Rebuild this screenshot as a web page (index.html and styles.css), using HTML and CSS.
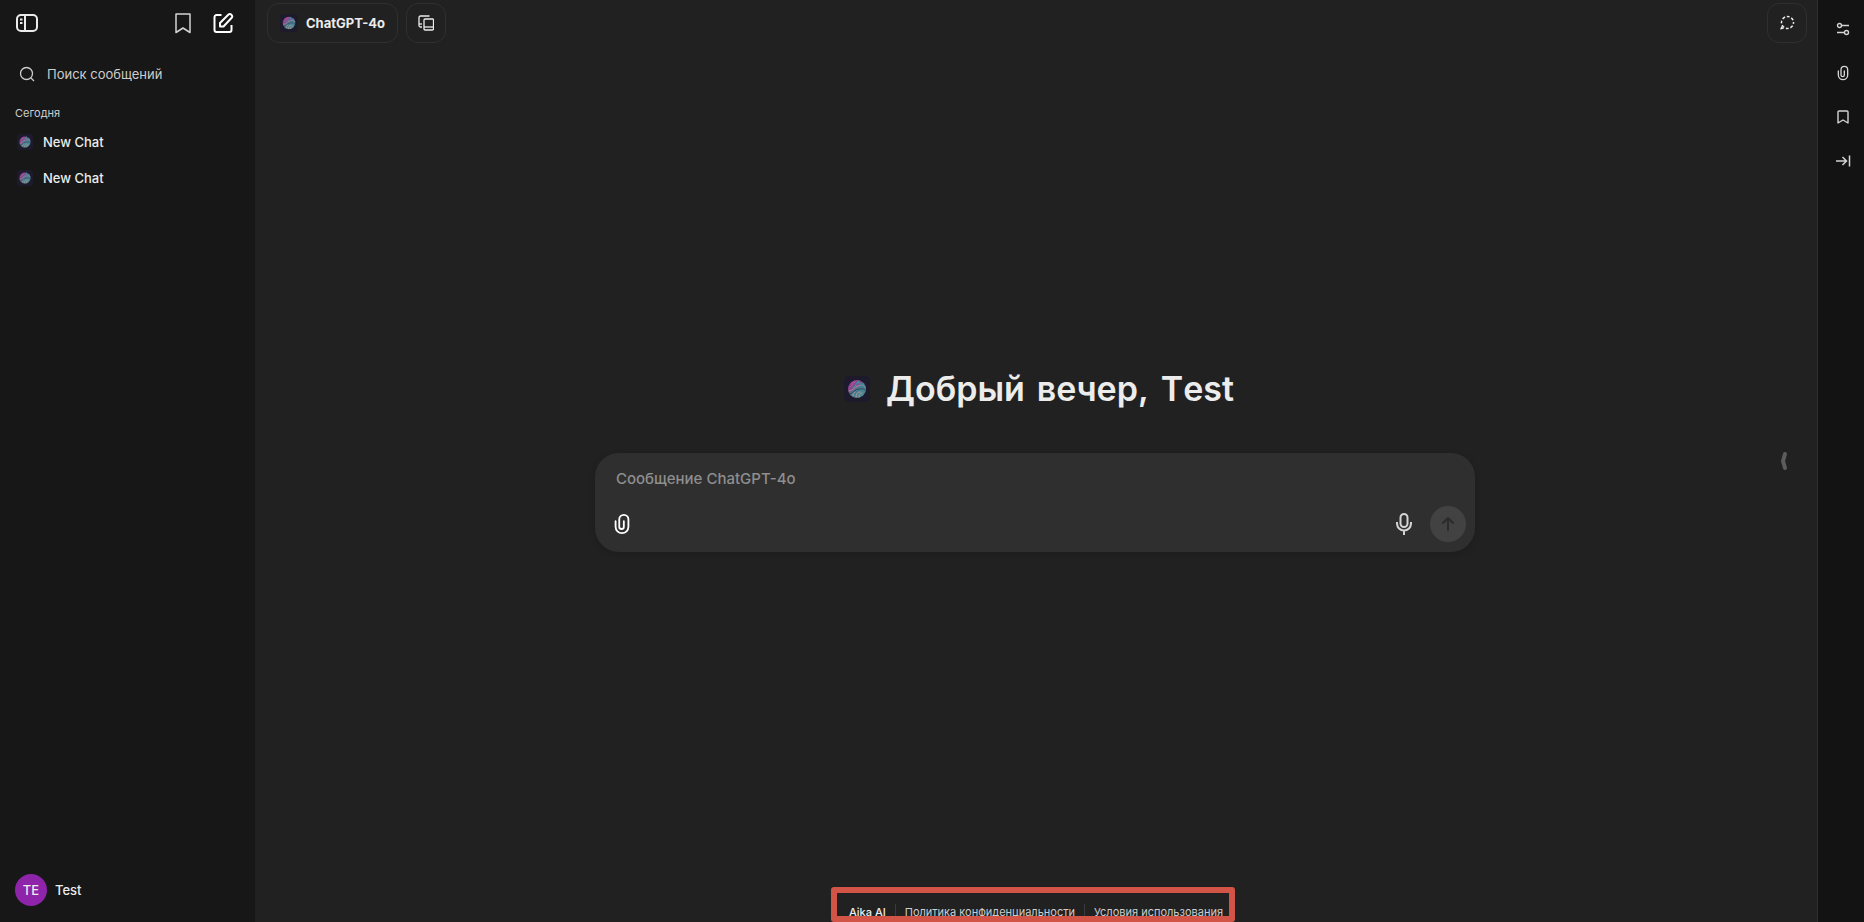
FILE: index.html
```html
<!DOCTYPE html>
<html lang="ru">
<head>
    <meta charset="UTF-8">
    <meta name="viewport" content="width=device-width, initial-scale=1.0">
    <title>Aika AI</title>
    <link rel="stylesheet" href="styles.css">
</head>
<body>

<!-- Общий логотип и скрепка -->
<svg class="defs" aria-hidden="true">
    <defs>
        <linearGradient id="orb" x1="0" y1="0" x2="0.8" y2="1">
            <stop offset="0" stop-color="#7c3f98"/>
            <stop offset="0.4" stop-color="#8c4a88"/>
            <stop offset="0.55" stop-color="#477c90"/>
            <stop offset="1" stop-color="#508a98"/>
        </linearGradient>
    </defs>
    <symbol id="logo" viewBox="0 0 26 26">
        <rect width="26" height="26" rx="5" fill="#1d1a2c"/>
        <circle cx="13" cy="13" r="9" fill="url(#orb)"/>
        <g fill="none" stroke-linecap="round">
            <path d="M5 15c4 0 5-4 9-5s5-2 7 1" stroke="#a98a98" stroke-width="1"/>
            <path d="M6 18c4-1 5-5 9-5s4-1 6 1" stroke="#2e4a62" stroke-width="1"/>
            <path d="M15 5c-1 3 2 4 5 3M15 5c-3 2-3 5-6 7" stroke="#3d8fa5" stroke-width="1.2"/>
            <path d="M7 8l3-3M6 11l6-6" stroke="#b852a0" stroke-width="1"/>
            <path d="M12 21c0-3 1-5 4-5M15 21c0-2 1-4 3-4M9 20c0-2 0-3 2-4" stroke="#a99a91" stroke-width="1"/>
        </g>
    </symbol>
    <symbol id="clip" viewBox="0 0 24 24">
        <path d="M5 9v6a7 7 0 0 0 14 0V7a5 5 0 0 0-10 0v8a2.500 2.500 0 0 0 5 0V9" fill="none" stroke="currentColor" stroke-linecap="round"/>
    </symbol>
</svg>

<div class="app">
    <aside class="sidebar">
        <div class="sidebar-top">
            <button class="icon-btn" aria-label="Закрыть панель">
                <svg width="24" height="24" viewBox="0 0 24 24" fill="none" stroke="currentColor" stroke-width="2">
                    <rect x="2" y="4" width="20" height="16" rx="4"/>
                    <path d="M10 4v16"/>
                    <path d="M5 8.500h2.500M5 12h2.500" stroke-width="1.800"/>
                </svg>
            </button>
            <div class="sidebar-actions">
                <button class="icon-btn" aria-label="Закладки">
                    <svg width="24" height="24" viewBox="0 0 24 24" fill="none" stroke="currentColor" stroke-width="1.500">
                        <path d="M5 3h14v18.500l-7-4.500-7 4.500z" stroke-linejoin="round"/>
                    </svg>
                </button>
                <button class="icon-btn bright" aria-label="Новый чат">
                    <svg width="24" height="24" viewBox="0 0 24 24" fill="none" stroke="currentColor" stroke-width="2" stroke-linejoin="round">
                        <path d="M10.500 4H5.500a2 2 0 0 0-2 2v13a2 2 0 0 0 2 2h13a2 2 0 0 0 2-2v-5"/>
                        <path d="M9 15.500v-3.500L17.500 3.500a1.800 1.800 0 0 1 2.600 0l.6.600a1.800 1.800 0 0 1 0 2.600L12.500 15.500z"/>
                    </svg>
                </button>
            </div>
        </div>
        <label class="search">
            <svg width="16" height="16" viewBox="0 0 16 16" fill="none" stroke="currentColor" stroke-width="1.300">
                <circle cx="7.500" cy="7.500" r="6"/>
                <path d="M12 12l3 3"/>
            </svg>
            <input type="text" placeholder="Поиск сообщений" aria-label="Поиск сообщений">
        </label>
        <h2 class="group-title">Сегодня</h2>
        <nav class="chats">
            <a href="#"><svg width="16" height="16"><use href="#logo"/></svg>New Chat</a>
            <a href="#"><svg width="16" height="16"><use href="#logo"/></svg>New Chat</a>
        </nav>
        <button class="user">
            <span class="avatar">TE</span>
            <span>Test</span>
        </button>
    </aside>

    <main class="main">
        <header class="header">
            <button class="outline-btn model">
                <svg width="18" height="18"><use href="#logo"/></svg>
                ChatGPT-4o
            </button>
            <button class="outline-btn square" aria-label="Добавить модель">
                <svg width="16" height="16" viewBox="0 0 16 16" fill="none" stroke="currentColor" stroke-width="1.300">
                    <path d="M11.500 1H2.500a1.500 1.500 0 0 0-1.500 1.500v8a1.500 1.500 0 0 0 1.500 1.500H4"/>
                    <path d="M1 9h3"/>
                    <rect x="6" y="4" width="9.500" height="11" rx="1"/>
                    <path d="M6 12h9.500"/>
                </svg>
            </button>
            <button class="outline-btn square temp" aria-label="Временный чат">
                <svg width="16" height="16" viewBox="0 0 16 16" fill="none" stroke="currentColor" stroke-width="1.500">
                    <circle cx="8.500" cy="7.500" r="6" stroke-dasharray="2.900 1.812" stroke-dashoffset="1.450"/>
                    <path d="M1 14.500l1.500-3.500 2.500 2.800z" fill="currentColor" stroke="none"/>
                </svg>
            </button>
        </header>

        <section class="center">
            <div class="greeting">
                <svg width="26" height="26"><use href="#logo"/></svg>
                <h1><span>Добрый</span> <span>вечер,</span> <span>Test</span></h1>
            </div>
            <form class="composer">
                <textarea rows="1" placeholder="Сообщение ChatGPT-4o" aria-label="Сообщение ChatGPT-4o"></textarea>
                <div class="composer-row">
                    <button type="button" class="icon-btn bright" aria-label="Прикрепить файл">
                        <svg width="22" height="22" stroke-width="2"><use href="#clip"/></svg>
                    </button>
                    <button type="button" class="icon-btn mic" aria-label="Голосовой ввод">
                        <svg width="24" height="24" viewBox="0 0 24 24" fill="none" stroke="currentColor" stroke-width="2">
                            <rect x="8.500" y="2" width="7" height="13" rx="3.500"/>
                            <path d="M5 10v1.500a7 7 0 0 0 14 0V10M12 18.500V23"/>
                        </svg>
                    </button>
                    <button type="button" class="send" aria-label="Отправить">
                        <svg width="24" height="24" viewBox="0 0 24 24" fill="none" stroke="currentColor" stroke-width="2" stroke-linecap="round" stroke-linejoin="round">
                            <path d="M12 18V6M7 11l5-5 5 5"/>
                        </svg>
                    </button>
                </div>
            </form>
        </section>

        <footer class="footer">
            <div class="footer-links">
                <a href="#" class="brand">Aika AI</a>
                <a href="#">Политика конфиденциальности</a>
                <a href="#">Условия использования</a>
            </div>
        </footer>

        <button class="handle" aria-label="Скрыть панель">
            <svg width="8" height="20" viewBox="0 0 8 20" fill="none" stroke="currentColor" stroke-width="4" stroke-linecap="round" stroke-linejoin="round">
                <path d="M5 3L3 10l2 7"/>
            </svg>
        </button>
    </main>

    <aside class="rail">
        <button class="icon-btn" aria-label="Параметры">
            <svg width="14" height="14" viewBox="0 0 14 14" fill="none" stroke="currentColor" stroke-width="1.400">
                <circle cx="3.500" cy="3.500" r="2"/>
                <path d="M5.500 3.500H13M1 10.500h7.500"/>
                <circle cx="10.500" cy="10.500" r="2"/>
            </svg>
        </button>
        <button class="icon-btn" aria-label="Файлы">
            <svg width="16" height="16" stroke-width="2"><use href="#clip"/></svg>
        </button>
        <button class="icon-btn" aria-label="Закладки">
            <svg width="16" height="16" viewBox="0 0 16 16" fill="none" stroke="currentColor" stroke-width="1.400">
                <path d="M3 14V3a1 1 0 0 1 1-1h8a1 1 0 0 1 1 1v11l-5-3z" stroke-linejoin="round"/>
            </svg>
        </button>
        <button class="icon-btn" aria-label="Скрыть">
            <svg width="16" height="16" viewBox="0 0 16 16" fill="none" stroke="currentColor" stroke-width="1.500">
                <path d="M1 8h10.500M7.500 4l4 4-4 4M14.500 2.500v11"/>
            </svg>
        </button>
    </aside>
</div>

</body>
</html>
```

FILE: styles.css
```css
* {
    box-sizing: border-box;
}
body {
    margin: 0;
    font-family: Inter, "Noto Sans", sans-serif;
    font-size: 13px;
    line-height: 20px;
    color: #ececec;
    background-color: #212121;
}
button, input, textarea {
    font: inherit;
    color: inherit;
    background: none;
    border: none;
    padding: 0;
    outline: none;
}
button {
    cursor: pointer;
}
a {
    color: inherit;
    text-decoration: none;
}
svg {
    display: block;
    flex-shrink: 0;
}
.defs {
    position: absolute;
    width: 0;
    height: 0;
}
.app {
    display: flex;
    min-height: 100vh;
}
.icon-btn {
    display: flex;
    align-items: center;
    justify-content: center;
    color: #d4d4d4;
}
.bright {
    color: #ffffff;
}

/* Sidebar */
.sidebar {
    display: flex;
    flex-direction: column;
    flex-shrink: 0;
    width: 255px;
    padding: 0 15px 16px;
    background-color: #171717;
}
.sidebar-top {
    display: flex;
    align-items: center;
    justify-content: space-between;
    height: 46px;
    padding-right: 5px;
}
.sidebar-top > .icon-btn {
    color: #ececec;
}
.sidebar-actions {
    display: flex;
    gap: 16px;
}
.search {
    display: flex;
    align-items: center;
    gap: 12px;
    height: 40px;
    margin-top: 8px;
    padding-left: 4px;
    color: #cdcdcd;
}
.search input {
    flex: 1;
    min-width: 0;
}
.search input::placeholder {
    color: #cdcdcd;
    opacity: 1;
}
.group-title {
    margin: 9px 0 1px;
    font-size: 11px;
    font-weight: 400;
    color: #cdcdcd;
}
.chats a {
    display: flex;
    align-items: center;
    gap: 10px;
    height: 36px;
    padding-left: 2px;
    font-weight: 500;
}
.user {
    display: flex;
    align-items: center;
    gap: 8px;
    margin-top: auto;
    font-weight: 500;
}
.avatar {
    width: 32px;
    height: 32px;
    border-radius: 50%;
    background-color: #8e24aa;
    line-height: 32px;
    text-align: center;
}

/* Main */
.main {
    position: relative;
    display: flex;
    flex: 1;
    flex-direction: column;
    min-width: 0;
}
.header {
    display: flex;
    align-items: center;
    gap: 8px;
    height: 46px;
    padding: 0 10px 0 12px;
}
.outline-btn {
    display: flex;
    align-items: center;
    justify-content: center;
    height: 40px;
    border: 1px solid #2f2f2f;
    border-radius: 12px;
}
.model {
    gap: 8px;
    padding: 0 12px;
    font-weight: 700;
}
.square {
    width: 40px;
}
.temp {
    margin-left: auto;
}
.center {
    display: flex;
    flex: 1;
    flex-direction: column;
    align-items: center;
    justify-content: center;
    gap: 44px;
    padding: 0 18px 0 16px;
}
.greeting {
    display: flex;
    align-items: center;
    gap: 16px;
    padding-left: 8px;
}
.greeting h1 {
    display: flex;
    gap: 12px;
    margin: 0;
    font-size: 34px;
    font-weight: 600;
    line-height: 40px;
    font-kerning: none;
}
.composer {
    width: 100%;
    max-width: 880px;
    padding: 14px 9px 10px 16px;
    border-radius: 24px;
    background-color: #2f2f2f;
    box-shadow: 0 2px 6px rgba(0, 0, 0, 0.15);
}
.composer textarea {
    display: block;
    width: 100%;
    height: 24px;
    padding-left: 5px;
    font-size: 15px;
    font-weight: 500;
    line-height: 24px;
    resize: none;
}
.composer textarea::placeholder {
    color: #8e8e8e;
    opacity: 1;
}
.composer-row {
    display: flex;
    align-items: center;
    margin-top: 15px;
}
.mic {
    margin-left: auto;
    margin-right: 14px;
}
.send {
    display: flex;
    align-items: center;
    justify-content: center;
    width: 36px;
    height: 36px;
    border-radius: 50%;
    background-color: #424242;
    color: #2a2a2a;
}
.footer {
    display: flex;
    align-items: flex-end;
    justify-content: center;
    height: 48px;
    padding-bottom: 2px;
}
.footer-links {
    position: relative;
    display: flex;
    align-items: center;
    font-size: 11px;
    line-height: 16px;
    color: #cdcdcd;
}
.footer-links a + a {
    margin-left: 9px;
    padding-left: 9px;
    border-left: 1px solid #3a3a3a;
}
.footer-links .brand {
    font-weight: 500;
    color: #ececec;
}
/* Frame over the links */
.footer-links::after {
    content: "";
    position: absolute;
    top: -17px;
    right: -12px;
    bottom: -2px;
    left: -18px;
    border: 6px solid #d15446;
    border-radius: 3px;
    pointer-events: none;
}
.handle {
    position: absolute;
    top: 50%;
    right: 29px;
    transform: translateY(-50%);
    color: #5c5c5c;
}

/* Right rail */
.rail {
    display: flex;
    flex-direction: column;
    align-items: center;
    flex-shrink: 0;
    gap: 20px;
    width: 47px;
    padding: 17px 0 0 3px;
    border-left: 1px solid #2f2f2f;
    background-color: #131313;
}
.rail .icon-btn {
    width: 24px;
    height: 24px;
}
```
